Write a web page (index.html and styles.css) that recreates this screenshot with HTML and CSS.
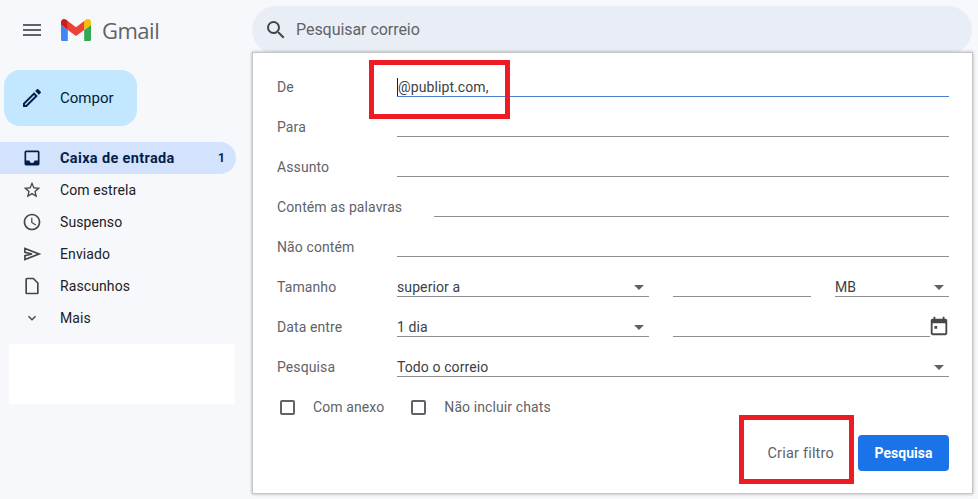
FILE: index.html
```html
<!DOCTYPE html>
<html lang="pt">
<head>
<meta charset="utf-8">
<title>Gmail</title>
<link rel="stylesheet" href="styles.css">
</head>
<body>
<div class="app">
  <header class="topbar">
    <div class="brand">
      <svg class="menu-icon" viewBox="0 0 24 24"><path d="M3 18h18v-2H3v2zm0-5h18v-2H3v2zm0-7v2h18V6H3z"/></svg>
      <svg class="logo" viewBox="52 42 88 66"><path fill="#4285f4" d="M58 108h14V74L52 59v43c0 3.32 2.69 6 6 6"/><path fill="#34a853" d="M120 108h14c3.32 0 6-2.69 6-6V59l-20 15"/><path fill="#fbbc04" d="M120 48v26l20-15v-8c0-7.42-8.47-11.65-14.4-7.2"/><path fill="#ea4335" d="M72 74V48l24 18 24-18v26L96 92"/><path fill="#c5221f" d="M52 51v8l20 15V48l-5.6-4.2c-5.94-4.45-14.4-.22-14.4 7.2"/></svg>
      <span class="wordmark">Gmail</span>
    </div>
    <div class="searchbar">
      <svg class="search-icon" viewBox="0 0 24 24"><path d="M15.5 14h-.79l-.28-.27A6.471 6.471 0 0 0 16 9.5 6.5 6.5 0 1 0 9.5 16c1.61 0 3.09-.59 4.23-1.57l.27.28v.79l5 4.99L20.49 19l-4.99-5zm-6 0C7.01 14 5 11.99 5 9.5S7.01 5 9.5 5 14 7.01 14 9.5 11.99 14 9.5 14z"/></svg>
      <span class="search-text">Pesquisar correio</span>
    </div>
  </header>

  <aside class="sidebar">
    <button class="compose">
      <svg class="compose-icon" viewBox="0 0 24 24"><path d="M14.06 9.02l.92.92L5.92 19H5v-.92l9.06-9.06M17.66 3c-.25 0-.51.1-.7.29l-1.83 1.83 3.75 3.75 1.83-1.83c.39-.39.39-1.02 0-1.41l-2.34-2.34c-.2-.2-.45-.29-.71-.29zm-3.6 3.19L3 17.25V21h3.75L17.81 9.94l-3.75-3.75z"/></svg>
      <span>Compor</span>
    </button>
    <nav class="nav">
      <div class="nav-item active">
        <svg class="nav-icon" viewBox="0 0 24 24"><path d="M19 3H5c-1.1 0-2 .9-2 2v14c0 1.1.9 2 2 2h14c1.1 0 2-.9 2-2V5c0-1.1-.9-2-2-2zm0 12h-4c0 1.66-1.35 3-3 3s-3-1.34-3-3H5V5h14v10z"/></svg>
        <span class="nav-label">Caixa de entrada</span><span class="count">1</span>
      </div>
      <div class="nav-item">
        <svg class="nav-icon" viewBox="0 0 24 24"><path d="M22 9.24l-7.19-.62L12 2 9.19 8.63 2 9.24l5.46 4.73L5.82 21 12 17.27 18.18 21l-1.63-7.03L22 9.24zM12 15.4l-3.76 2.27 1-4.28-3.32-2.88 4.38-.38L12 6.1l1.71 4.04 4.38.38-3.32 2.88 1 4.28L12 15.4z"/></svg>
        <span class="nav-label">Com estrela</span>
      </div>
      <div class="nav-item">
        <svg class="nav-icon" viewBox="0 0 24 24"><path d="M11.99 2C6.47 2 2 6.48 2 12s4.47 10 9.99 10C17.52 22 22 17.52 22 12S17.52 2 11.99 2zM12 20c-4.42 0-8-3.58-8-8s3.58-8 8-8 8 3.58 8 8-3.58 8-8 8zm.5-13H11v6l5.25 3.15.75-1.23-4.5-2.67z"/></svg>
        <span class="nav-label">Suspenso</span>
      </div>
      <div class="nav-item">
        <svg class="nav-icon outline" viewBox="0 0 24 24"><path d="M3.5 5.5v4.5l8.5 2-8.5 2v4.5L20.5 12z"/></svg>
        <span class="nav-label">Enviado</span>
      </div>
      <div class="nav-item">
        <svg class="nav-icon" viewBox="0 0 24 24"><path d="M13.17 4L18 8.83V20H6V4h7.17M14 2H6c-1.1 0-2 .9-2 2v16c0 1.1.9 2 2 2h12c1.1 0 2-.9 2-2V8l-6-6z"/></svg>
        <span class="nav-label">Rascunhos</span>
      </div>
      <div class="nav-item">
        <svg class="nav-icon chevron" viewBox="0 0 24 24"><path d="M16.59 8.59L12 13.17 7.41 8.59 6 10l6 6 6-6z"/></svg>
        <span class="nav-label">Mais</span>
      </div>
    </nav>
    <div class="side-box"></div>
  </aside>
</div>

<section class="panel">
  <div class="row">
    <span class="label">De</span>
    <div class="field focused"><span class="caret"></span>@publipt.com,</div>
  </div>
  <div class="row"><span class="label">Para</span><div class="field"></div></div>
  <div class="row"><span class="label">Assunto</span><div class="field"></div></div>
  <div class="row"><span class="label wide">Contém as palavras</span><div class="field"></div></div>
  <div class="row"><span class="label">Não contém</span><div class="field"></div></div>
  <div class="row">
    <span class="label">Tamanho</span>
    <div class="field select s-main">superior a<i class="arrow"></i></div>
    <div class="field s-num"></div>
    <div class="field select s-unit">MB<i class="arrow"></i></div>
  </div>
  <div class="row">
    <span class="label">Data entre</span>
    <div class="field select s-main">1 dia<i class="arrow"></i></div>
    <div class="field s-date"></div>
    <svg class="cal" viewBox="0 0 24 24"><path d="M19 4h-1V2h-2v2H8V2H6v2H5c-1.11 0-1.99.9-1.99 2L3 20a2 2 0 0 0 2 2h14c1.1 0 2-.9 2-2V6c0-1.1-.9-2-2-2zm0 16H5V9h14v11zM7 12h3v3H7z"/></svg>
  </div>
  <div class="row">
    <span class="label">Pesquisa</span>
    <div class="field select">Todo o correio<i class="arrow"></i></div>
  </div>
  <div class="row checks">
    <span class="box"></span><span class="check-label first">Com anexo</span>
    <span class="box"></span><span class="check-label">Não incluir chats</span>
  </div>
  <div class="actions">
    <span class="create">Criar filtro</span>
    <button class="search-btn">Pesquisa</button>
  </div>
  <div class="mark mark-from"></div>
  <div class="mark mark-filter"></div>
</section>
</body>
</html>
```
FILE: styles.css
```css
* { box-sizing: border-box; }
html, body { height: 100%; }
body {
  margin: 0;
  background: #f6f8fc;
  font-family: Roboto, "Liberation Sans", sans-serif;
  font-size: 14px;
  letter-spacing: .1px;
  color: #202124;
  overflow: hidden;
}
.app { display: flex; flex-direction: column; height: 100%; }

.topbar { display: flex; padding-top: 6px; height: 70px; flex: none; }
.brand { width: 252px; flex: none; display: flex; align-items: center; height: 48px; padding-left: 20px; }
.menu-icon { width: 24px; height: 24px; fill: #5f6368; }
.logo { width: 30px; height: 22.5px; margin-left: 17px; }
.wordmark { margin-left: 11px; font-family: "Open Sans", sans-serif; font-size: 22px; letter-spacing: -0.5px; color: #5f6368; }
.searchbar {
  width: 720px; height: 48px; border-radius: 24px; background: #e9eef6;
  display: flex; align-items: center; padding-left: 12px;
}
.search-icon { width: 24px; height: 24px; fill: #444746; }
.search-text { margin: -2px 0 0 8px; font-size: 16px; letter-spacing: -.05px; color: #5f6368; }

.sidebar { width: 252px; flex: none; }
.compose {
  display: flex; align-items: center; width: 133px; height: 56px; margin-left: 4px;
  border: 0; border-radius: 16px; background: #c2e7ff; padding: 0 0 0 16px;
  font: 400 15px Roboto, sans-serif; color: #001d35;
}
.compose-icon { width: 24px; height: 24px; fill: #041e49; margin-right: 16px; }
.nav { margin-top: 16px; width: 236px; }
.nav-item {
  display: flex; align-items: center; height: 32px; padding: 0 11px 0 22px;
  color: #202124; border-radius: 0 16px 16px 0;
}
.nav-item.active { background: #d3e3fd; color: #041e49; font-weight: 700; }
.active .nav-label { font-size: 14.5px; letter-spacing: .35px; }
.nav-icon { width: 20px; height: 20px; fill: #444746; flex: none; }
.active .nav-icon { fill: #041e49; }
.nav-icon.outline { fill: none; stroke: #444746; stroke-width: 2; }
.chevron { transform: scale(.8); }
.nav-label { margin-left: 18px; flex: 1; }
.count { font-size: 12px; font-weight: 700; }
.side-box { width: 226px; height: 60px; margin: 10px 0 0 9px; background: #fff; }

.panel {
  position: absolute; left: 252px; top: 52px; width: 721px; height: 442px;
  background: #fff; border: 1px solid #c6c6c6;
  box-shadow: 0 0 3px rgba(0,0,0,.3);
  padding: 14px 23px 0 24px;
}
.row { display: flex; align-items: center; height: 40px; }
.label { width: 120px; flex: none; color: #5f6368; }
.label.wide { width: 157px; }
.field {
  flex: 1; height: 20px; line-height: 21px; border-bottom: 1px solid #8e8e8e;
  position: relative; color: #3c4043;
}
.field.focused { border-bottom-color: #4a7fd3; }
.caret { position: absolute; left: 0; top: 1px; width: 1px; height: 18px; background: #202124; }
.focused { padding-left: 1px; }
.select { padding-right: 20px; }
.arrow {
  position: absolute; right: 5px; top: 8px; width: 0; height: 0;
  border-left: 5px solid transparent; border-right: 5px solid transparent; border-top: 5px solid #5f6368;
}
.s-main { flex: none; width: 252px; }
.s-num { flex: none; width: 138px; margin-left: 24px; }
.s-unit { flex: none; width: 114px; margin-left: 24px; }
.s-date { margin-left: 24px; }
.cal { width: 22px; height: 22px; fill: #444746; flex: none; margin: -2px -1px 0 -2px; }

.box { width: 15px; height: 15px; border: 2px solid #5f6368; border-radius: 2px; margin-left: 3px; flex: none; }
.check-label { margin-left: 18px; color: #5f6368; }
.check-label.first { margin-right: 24px; }

.actions { display: flex; justify-content: flex-end; align-items: center; margin-top: 8px; height: 36px; }
.create { color: #5f6368; font-weight: 400; font-size: 14.5px; letter-spacing: .2px; margin-right: 24px; }
.search-btn {
  width: 91px; height: 36px; border: 0; border-radius: 4px; background: #1a73e8;
  color: #fff; font: 700 14px Roboto, sans-serif;
}
.mark { position: absolute; border: 5px solid #ed1c24; }
.mark-from { left: 116px; top: 7px; width: 141px; height: 59px; }
.mark-filter { left: 486px; top: 362px; width: 115px; height: 69px; }
```
